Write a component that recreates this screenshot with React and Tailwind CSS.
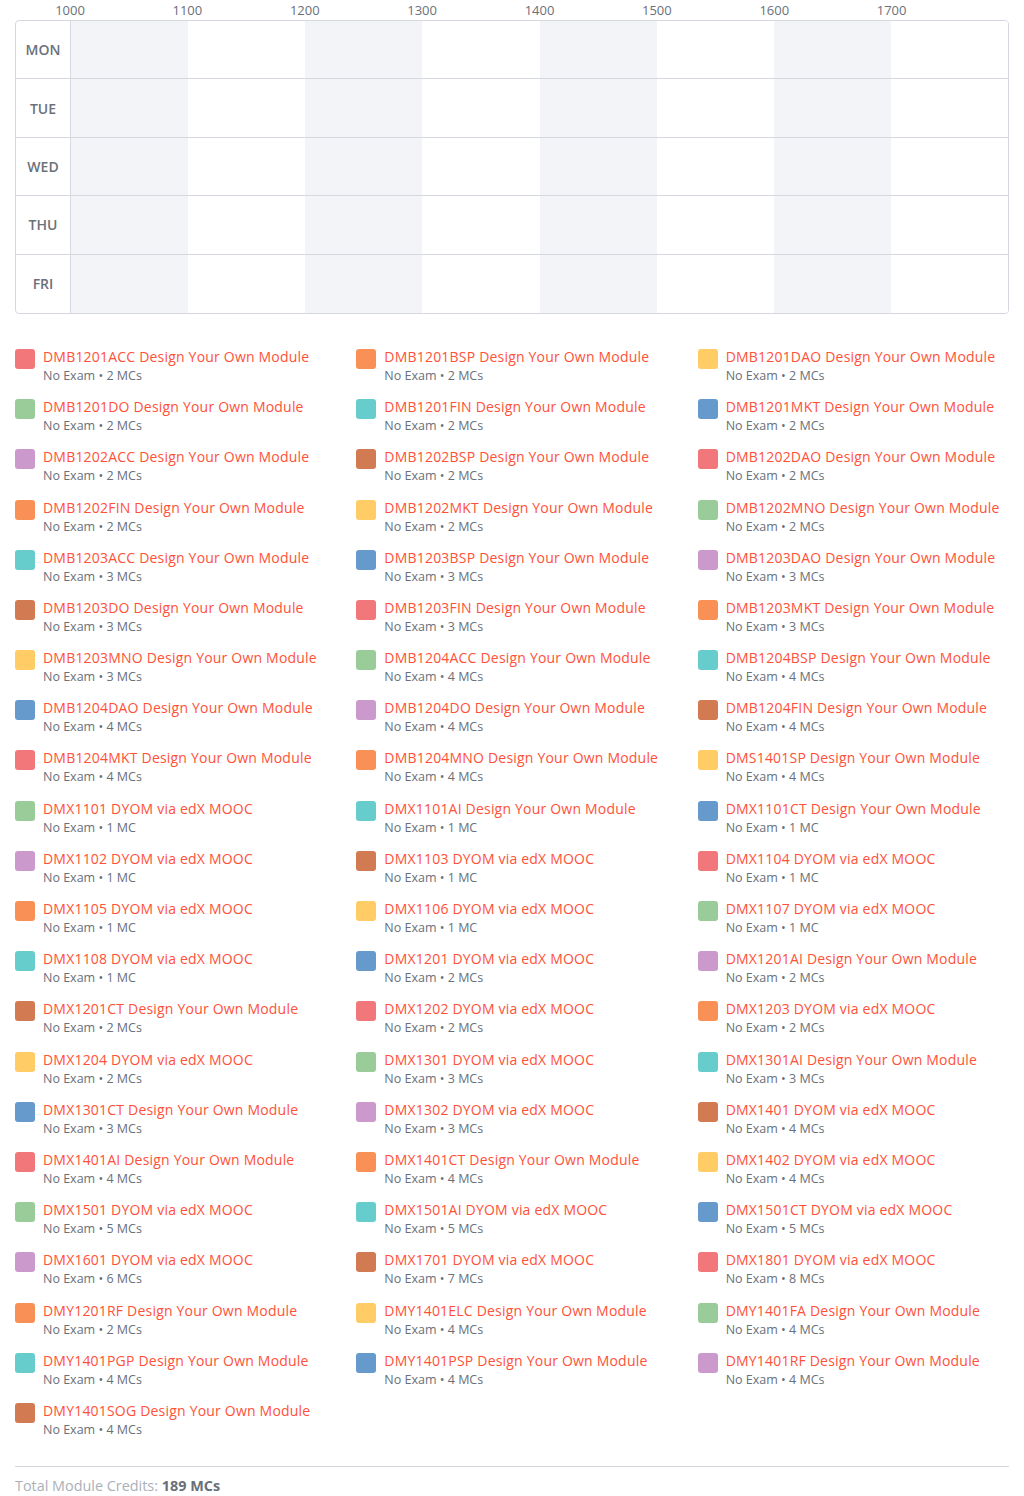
import React from 'react';

const COLORS = ['#f2777a', '#f99157', '#ffcc66', '#99cc99', '#66cccc', '#6699cc', '#cc99cc', '#d27b53'];

const DAYS = ['MON', 'TUE', 'WED', 'THU', 'FRI'];
const HOURS = ['1000', '1100', '1200', '1300', '1400', '1500', '1600', '1700'];

const DYOM = 'Design Your Own Module';
const EDX = 'DYOM via edX MOOC';

// [code, title, credits]
const MODULES = [
  ['DMB1201ACC', DYOM, 2], ['DMB1201BSP', DYOM, 2], ['DMB1201DAO', DYOM, 2],
  ['DMB1201DO', DYOM, 2], ['DMB1201FIN', DYOM, 2], ['DMB1201MKT', DYOM, 2],
  ['DMB1202ACC', DYOM, 2], ['DMB1202BSP', DYOM, 2], ['DMB1202DAO', DYOM, 2],
  ['DMB1202FIN', DYOM, 2], ['DMB1202MKT', DYOM, 2], ['DMB1202MNO', DYOM, 2],
  ['DMB1203ACC', DYOM, 3], ['DMB1203BSP', DYOM, 3], ['DMB1203DAO', DYOM, 3],
  ['DMB1203DO', DYOM, 3], ['DMB1203FIN', DYOM, 3], ['DMB1203MKT', DYOM, 3],
  ['DMB1203MNO', DYOM, 3], ['DMB1204ACC', DYOM, 4], ['DMB1204BSP', DYOM, 4],
  ['DMB1204DAO', DYOM, 4], ['DMB1204DO', DYOM, 4], ['DMB1204FIN', DYOM, 4],
  ['DMB1204MKT', DYOM, 4], ['DMB1204MNO', DYOM, 4], ['DMS1401SP', DYOM, 4],
  ['DMX1101', EDX, 1], ['DMX1101AI', DYOM, 1], ['DMX1101CT', DYOM, 1],
  ['DMX1102', EDX, 1], ['DMX1103', EDX, 1], ['DMX1104', EDX, 1],
  ['DMX1105', EDX, 1], ['DMX1106', EDX, 1], ['DMX1107', EDX, 1],
  ['DMX1108', EDX, 1], ['DMX1201', EDX, 2], ['DMX1201AI', DYOM, 2],
  ['DMX1201CT', DYOM, 2], ['DMX1202', EDX, 2], ['DMX1203', EDX, 2],
  ['DMX1204', EDX, 2], ['DMX1301', EDX, 3], ['DMX1301AI', DYOM, 3],
  ['DMX1301CT', DYOM, 3], ['DMX1302', EDX, 3], ['DMX1401', EDX, 4],
  ['DMX1401AI', DYOM, 4], ['DMX1401CT', DYOM, 4], ['DMX1402', EDX, 4],
  ['DMX1501', EDX, 5], ['DMX1501AI', EDX, 5], ['DMX1501CT', EDX, 5],
  ['DMX1601', EDX, 6], ['DMX1701', EDX, 7], ['DMX1801', EDX, 8],
  ['DMY1201RF', DYOM, 2], ['DMY1401ELC', DYOM, 4], ['DMY1401FA', DYOM, 4],
  ['DMY1401PGP', DYOM, 4], ['DMY1401PSP', DYOM, 4], ['DMY1401RF', DYOM, 4],
  ['DMY1401SOG', DYOM, 4],
];

function Timetable() {
  return (
    <div className="px-[15px]">
      {/* hour labels */}
      <div className="flex h-[20px] pl-[55px]">
        {HOURS.map((h) => (
          <div key={h} className="flex-1 text-[13px] leading-[20px] text-[#69707a]">
            <span className="inline-block -translate-x-1/2">{h}</span>
          </div>
        ))}
      </div>
      <div className="border border-[#d5d8de] rounded-[4px] overflow-hidden">
        {DAYS.map((d, i) => (
          <div key={d} className={`flex h-[58.4px] ${i < DAYS.length - 1 ? 'border-b border-[#d5d8de]' : ''}`}>
            <div className="w-[55px] shrink-0 border-r border-[#d5d8de] flex items-center justify-center text-[14px] font-semibold text-[#6b717b]">
              {d}
            </div>
            {HOURS.map((h, j) => (
              <div key={h} className={`flex-1 ${j % 2 === 0 ? 'bg-[#f3f4f8]' : 'bg-white'}`} />
            ))}
          </div>
        ))}
      </div>
    </div>
  );
}

function ModuleItem({ mod, idx }) {
  const [code, title, mc] = mod;
  return (
    <div className="flex px-[15px] h-[50.2px]">
      <div
        className="w-[20px] h-[20px] rounded-[3px] shrink-0 mt-[1px]"
        style={{ backgroundColor: COLORS[idx % COLORS.length] }}
      />
      <div className="pl-[8px]">
        <div className="text-[14px] leading-[18px] text-[#ff5138] tracking-[0.2px]">
          {code} {title}
        </div>
        <div className="text-[12.5px] leading-[18px] mt-[1px] text-[#69707a]">
          No Exam • {mc} {mc === 1 ? 'MC' : 'MCs'}
        </div>
      </div>
    </div>
  );
}

export default function App() {
  return (
    <div className="w-[1024px] bg-white" style={{ fontFamily: '"Open Sans", sans-serif' }}>
      <Timetable />
      <div className="grid grid-cols-3 mt-[34px]">
        {MODULES.map((m, i) => (
          <ModuleItem key={m[0]} mod={m} idx={i} />
        ))}
      </div>
      <div className="mx-[15px] mt-[14px] border-t border-[#d5d8de] pt-[9px] text-[14.4px] leading-[20px] text-[#aab0b8]">
        Total Module Credits: <span className="font-bold text-[#69707a]">189 MCs</span>
      </div>
    </div>
  );
}
